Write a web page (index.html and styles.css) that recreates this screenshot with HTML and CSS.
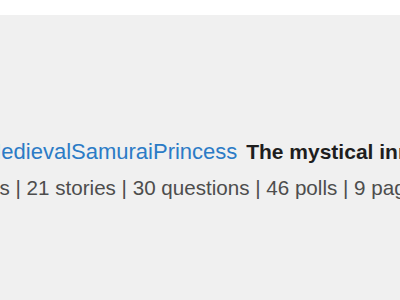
FILE: index.html
```html
<!DOCTYPE html>
<html>
<head>
<meta charset="utf-8">
<link rel="stylesheet" href="styles.css">
</head>
<body>
<div class="topbar"></div>
<main class="content">
  <div class="title-line"><a class="author" href="#">MedievalSamuraiPrincess</a> <span class="title">The mystical inn of legends</span></div>
  <div class="stats">quizzes | 21 stories | 30 questions | 46 polls | 9 pages</div>
</main>
</body>
</html>
```
FILE: styles.css
```css
html, body {
  margin: 0;
  padding: 0;
  background: #f0f0f0;
  width: 400px;
  height: 300px;
  overflow: hidden;
}
.topbar {
  height: 15px;
  background: #ffffff;
}
.content {
  padding-top: 125px;
  font-family: "Liberation Sans", Arial, Helvetica, sans-serif;
  font-size: 21px;
  line-height: 24px;
  white-space: nowrap;
  overflow: hidden;
}
.title-line {
  margin-left: -17px;
}
.author {
  color: #2b7bc6;
  text-decoration: none;
  font-size: 22px;
}
.title {
  margin-left: 3px;
  color: #1e1e1e;
  font-weight: bold;
}
.stats {
  margin-top: 12px;
  margin-left: -60px;
  font-size: 20.6px;
  color: #4d4d4d;
}
```
